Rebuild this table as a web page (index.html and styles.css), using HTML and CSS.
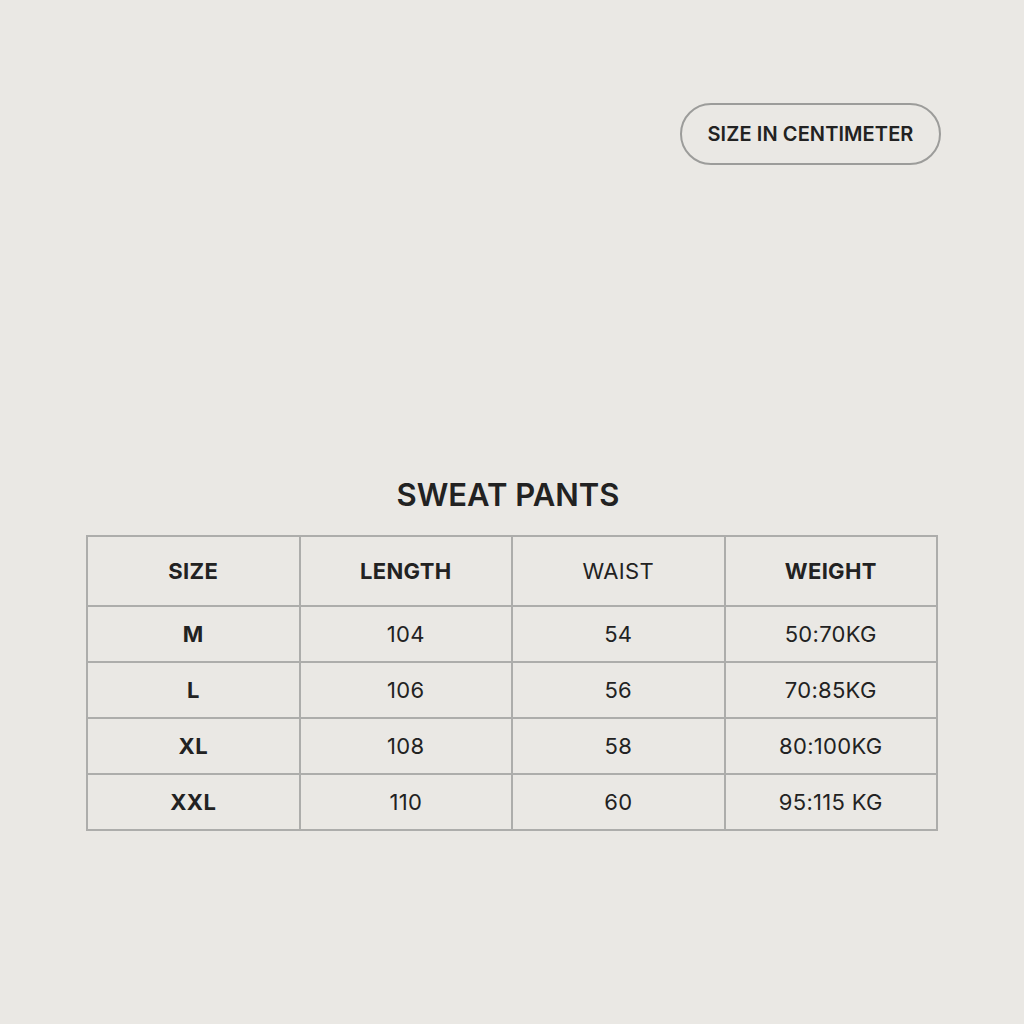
FILE: index.html
```html
<!DOCTYPE html>
<html>
<head>
<meta charset="utf-8">
<link rel="stylesheet" href="styles.css">
</head>
<body>
<div class="page">
  <div class="top">
    <div class="pill">SIZE IN CENTIMETER</div>
  </div>
  <div class="chart">
    <h1 class="title">SWEAT PANTS</h1>
    <table class="sizes">
      <thead>
        <tr><th class="b">SIZE</th><th class="b">LENGTH</th><th class="r">WAIST</th><th class="b">WEIGHT</th></tr>
      </thead>
      <tbody>
        <tr><td class="b">M</td><td>104</td><td>54</td><td>50:70KG</td></tr>
        <tr><td class="b">L</td><td>106</td><td>56</td><td>70:85KG</td></tr>
        <tr><td class="b">XL</td><td>108</td><td>58</td><td>80:100KG</td></tr>
        <tr><td class="b">XXL</td><td>110</td><td>60</td><td>95:115 KG</td></tr>
      </tbody>
    </table>
  </div>
</div>
</body>
</html>
```
FILE: styles.css
```css
html, body {
  margin: 0;
  padding: 0;
  background: #eae8e4;
}
body {
  font-family: Inter, "Liberation Sans", sans-serif;
  color: #222;
  width: 1024px;
  height: 1024px;
}
.page {
  display: flex;
  flex-direction: column;
}
.top {
  display: flex;
  justify-content: flex-end;
  padding: 103px 83px 0 0;
}
.pill {
  box-sizing: border-box;
  height: 62px;
  width: 261px;
  border: 2px solid #9c9c9a;
  border-radius: 31px;
  display: flex;
  align-items: center;
  justify-content: center;
  font-size: 20px;
  font-weight: 600;
  letter-spacing: 0.1px;
  color: #222;
}
.chart {
  display: flex;
  flex-direction: column;
  align-items: center;
  padding: 309px 0 0 86px;
  width: 852px;
}
.title {
  margin: 0 8px 0 0;
  padding-top: 3px;
  font-size: 31px;
  font-weight: 600;
  line-height: 36px;
  height: 58px;
  color: #222;
}
.sizes {
  border-collapse: collapse;
  width: 852px;
  table-layout: fixed;
}
.sizes th, .sizes td {
  border: 2px solid #adadab;
  text-align: center;
  font-size: 22px;
  letter-spacing: 0.3px;
  padding: 0;
}
.sizes th {
  height: 68px;
}
.sizes td {
  height: 54px;
  font-weight: 400;
}
.sizes .b { font-weight: 700; }
.sizes .r { font-weight: 400; }
```
